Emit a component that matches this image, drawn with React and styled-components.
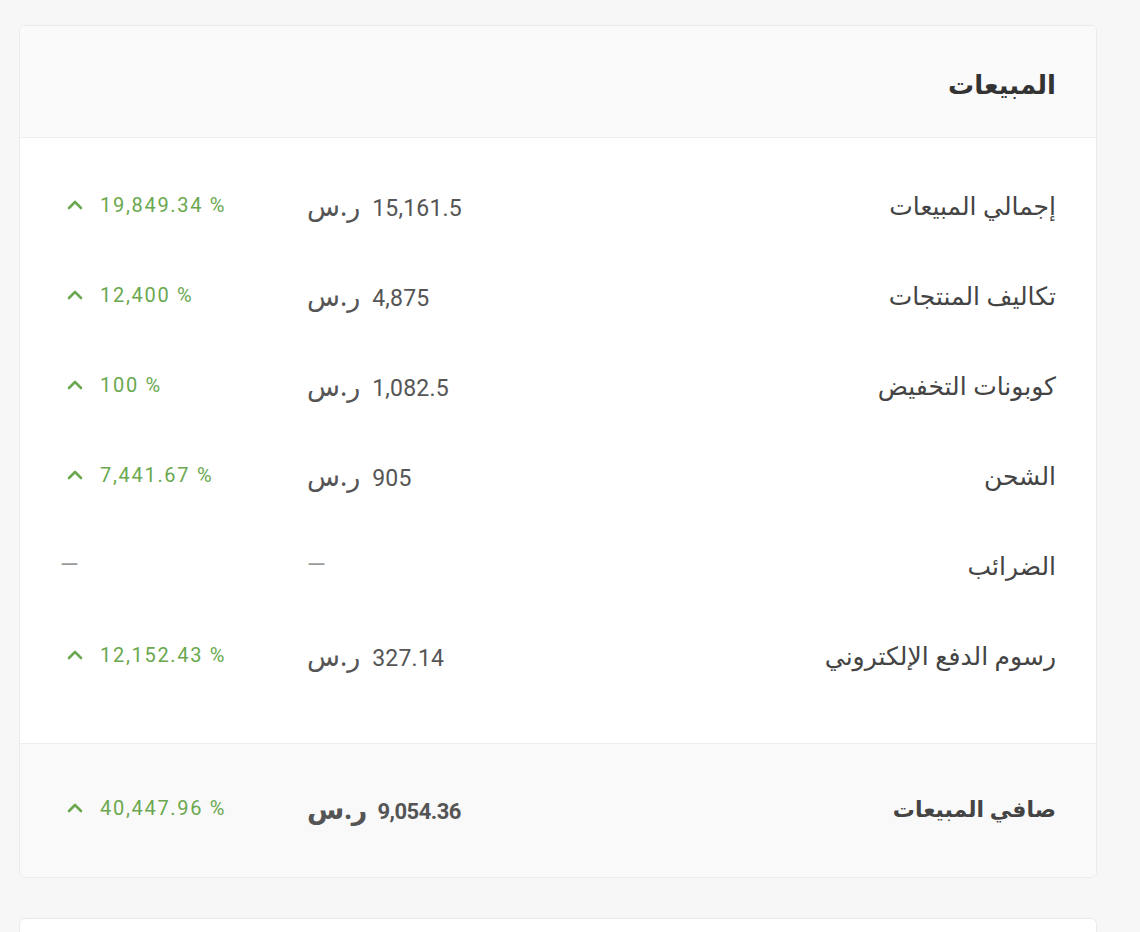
import React from 'react';
import styled, { createGlobalStyle } from 'styled-components';

const GlobalStyle = createGlobalStyle`
  body {
    margin: 0;
    background: #f7f7f7;
    font-family: "Noto Sans", "DejaVu Sans", sans-serif;
  }
`;

const Page = styled.div`
  direction: rtl;
  padding: 25px 43px 0 19px;
  display: flex;
  flex-direction: column;
  gap: 40px;
`;

const Card = styled.section`
  background: #fff;
  border: 1px solid #ebebeb;
  border-radius: 6px;
  overflow: hidden;
  min-height: ${p => p.$minHeight || 0}px;
`;

const CardHeader = styled.header`
  height: 112px;
  display: flex;
  align-items: center;
  padding: 4px 40px 0;
  box-sizing: border-box;
  background: #fafafa;
  border-bottom: 1px solid #eeeeee;
`;

const Title = styled.h2`
  margin: 0;
  font-size: 26px;
  font-weight: 700;
  color: #333;
`;

const Body = styled.div`
  padding: 22px 40px 43px;
`;

const Row = styled.div`
  display: grid;
  grid-template-columns: 1fr 300px 247px;
  align-items: center;
  height: 90px;
`;

const Footer = styled.div`
  background: #f9f9f9;
  border-top: 1px solid #eeeeee;
  padding: 19px 40px 24px;
`;

const Label = styled.div`
  font-size: ${p => (p.$bold ? 22 : 25)}px;
  color: #444;
  font-weight: ${p => (p.$bold ? 700 : 400)};
`;

const Value = styled.div`
  display: flex;
  align-items: baseline;
  justify-content: flex-end;
  gap: ${p => (p.$bold ? 10 : 12)}px;
  color: #555;
  font-weight: ${p => (p.$bold ? 700 : 400)};
`;

const Amount = styled.span`
  font-family: "Roboto", "Noto Sans", sans-serif;
  font-size: ${p => (p.$bold ? 22 : 23)}px;
  letter-spacing: ${p => (p.$bold ? -0.5 : 0.2)}px;
`;

const Currency = styled.span`
  font-size: 27px;
`;

const Change = styled.div`
  direction: ltr;
  display: flex;
  align-items: center;
  gap: 16px;
  font-family: "Roboto", "Noto Sans", sans-serif;
  font-size: 20px;
  letter-spacing: 1.7px;
  color: #6aa84f;
`;

const Dash = styled.span`
  font-family: "Roboto", sans-serif;
  font-size: 24px;
  letter-spacing: 0;
  color: #9a9a9a;
  line-height: 1;
`;

const Chevron = () => (
  <svg width="24" height="16" viewBox="0 0 24 16" fill="none">
    <polyline points="9,11 15,5 21,11" stroke="#6aa84f" strokeWidth="2.6" strokeLinecap="round" strokeLinejoin="round" />
  </svg>
);

const rows = [
  { label: 'إجمالي المبيعات', value: '15,161.5', change: '19,849.34 %' },
  { label: 'تكاليف المنتجات', value: '4,875', change: '12,400 %' },
  { label: 'كوبونات التخفيض', value: '1,082.5', change: '100 %' },
  { label: 'الشحن', value: '905', change: '7,441.67 %' },
  { label: 'الضرائب', value: null, change: null },
  { label: 'رسوم الدفع الإلكتروني', value: '327.14', change: '12,152.43 %' },
];

const ValueCell = ({ value, bold }) => (
  <Value $bold={bold}>
    {value ? (
      <>
        <Amount $bold={bold}>{value}</Amount>
        <Currency>ر.س</Currency>
      </>
    ) : (
      <Dash>—</Dash>
    )}
  </Value>
);

const ChangeCell = ({ change }) =>
  change ? (
    <Change>
      <Chevron />
      <span>{change}</span>
    </Change>
  ) : (
    <Change>
      <Dash>—</Dash>
    </Change>
  );

export default function App() {
  return (
    <>
      <GlobalStyle />
      <Page>
        <Card>
          <CardHeader>
            <Title>المبيعات</Title>
          </CardHeader>
          <Body>
            {rows.map(r => (
              <Row key={r.label}>
                <Label>{r.label}</Label>
                <ValueCell value={r.value} />
                <ChangeCell change={r.change} />
              </Row>
            ))}
          </Body>
          <Footer>
            <Row>
              <Label $bold>صافي المبيعات</Label>
              <ValueCell value="9,054.36" bold />
              <ChangeCell change="40,447.96 %" />
            </Row>
          </Footer>
        </Card>
        <Card $minHeight={40} />
      </Page>
    </>
  );
}
